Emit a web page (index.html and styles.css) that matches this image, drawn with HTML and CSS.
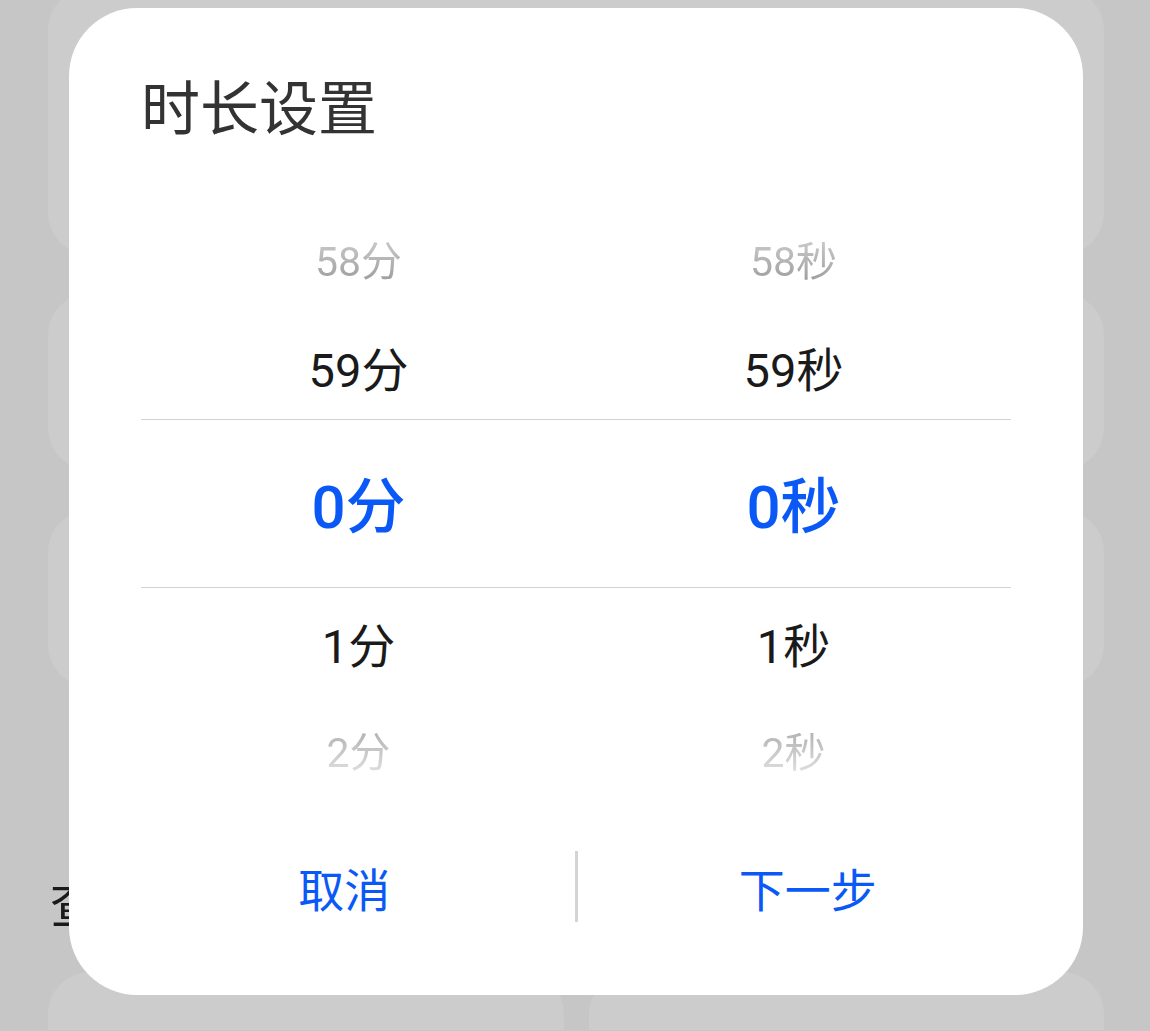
FILE: index.html
```html
<!DOCTYPE html>
<html lang="zh-CN">
<head>
<meta charset="utf-8">
<title>时长设置</title>
<link rel="stylesheet" href="styles.css">
</head>
<body>
<div class="backdrop">
  <div class="card card-first"></div>
  <div class="card card-mid"></div>
  <div class="card card-mid card-third"></div>
  <div class="under-label">查看</div>
  <div class="card-row">
    <div class="card card-bottom"></div>
    <div class="card card-bottom"></div>
  </div>
</div>

<div class="dialog">
  <h1 class="title">时长设置</h1>
  <div class="picker">
    <div class="row row-far-top"><span class="cell fade-top">58分</span><span class="cell fade-top">58秒</span></div>
    <div class="row row-near-top"><span class="cell">59分</span><span class="cell">59秒</span></div>
    <div class="row row-selected"><span class="cell selected">0分</span><span class="cell selected">0秒</span></div>
    <div class="row row-near-bottom"><span class="cell">1分</span><span class="cell">1秒</span></div>
    <div class="row row-far-bottom"><span class="cell fade-bottom">2分</span><span class="cell fade-bottom">2秒</span></div>
  </div>
  <div class="actions">
    <button class="action">取消</button>
    <span class="action-divider"></span>
    <button class="action">下一步</button>
  </div>
</div>
</body>
</html>
```

FILE: styles.css
```css
html, body {
  margin: 0;
  padding: 0;
}
body {
  width: 1150px;
  height: 1031px;
  overflow: hidden;
  background: #c6c6c6;
  position: relative;
  font-family: Roboto, "Noto Sans CJK SC", sans-serif;
}
.backdrop {
  display: flex;
  flex-direction: column;
  padding: 0 46px 0 48px;
}
.card {
  background: #cccccc;
  border-radius: 42px;
}
.card-first {
  margin-top: -12px;
  height: 267px;
}
.card-mid {
  margin-top: 38px;
  height: 177px;
}
.card-third {
  margin-top: 40px;
}
.under-label {
  margin-top: 188px;
  height: 52px;
  line-height: 52px;
  font-size: 50px;
  color: #1a1a1a;
  padding-left: 2px;
  font-family: "Noto Sans CJK SC", sans-serif;
  overflow: hidden;
}
.card-row {
  margin-top: 45px;
  display: grid;
  grid-template-columns: 1fr 1fr;
  gap: 25px;
}
.card-bottom {
  height: 58px;
  border-radius: 42px 42px 0 0;
}

.dialog {
  position: absolute;
  left: 69px;
  top: 8px;
  width: 1014px;
  height: 987px;
  background: #ffffff;
  border-radius: 68px;
  display: flex;
  flex-direction: column;
}
.title {
  margin: 0;
  padding: 57px 72px 0;
  height: 80px;
  line-height: 80px;
  font-size: 59px;
  font-weight: 400;
  color: #333333;
  font-family: "Noto Sans CJK SC", sans-serif;
}
.picker {
  margin: 63px 72px 0;
  display: flex;
  flex-direction: column;
}
.row {
  display: grid;
  grid-template-columns: 1fr 1fr;
  align-items: center;
  justify-items: center;
  box-sizing: border-box;
}
.cell {
  font-size: 47px;
  line-height: 1;
  color: #1a1a1a;
}
.row-far-top {
  height: 108px;
}
.row-near-top {
  height: 103px;
  padding-top: 5px;
}
.row-selected {
  height: 169px;
  padding-top: 8px;
  border-top: 1px solid #d2d2d2;
  border-bottom: 1px solid #d2d2d2;
}
.row-near-bottom {
  height: 116px;
}
.row-far-bottom {
  height: 98px;
}
.fade-top,
.fade-bottom {
  font-size: 41px;
  -webkit-background-clip: text;
  background-clip: text;
  color: transparent;
}
.fade-top {
  background-image: linear-gradient(to bottom, #c8c8c8, #9c9c9c);
}
.fade-bottom {
  background-image: linear-gradient(to bottom, #b4b4b4, #e0e0e0);
}
.selected {
  font-size: 60px;
  font-weight: 500;
  color: #0a59f7;
}
.actions {
  margin-top: auto;
  margin-bottom: 73px;
  padding: 0 45px;
  display: grid;
  grid-template-columns: 1fr 3px 1fr;
  align-items: center;
}
.action {
  border: 0;
  background: none;
  padding: 0;
  font-family: "Noto Sans CJK SC", sans-serif;
  font-size: 46px;
  font-weight: 400;
  color: #0a59f7;
  line-height: 60px;
  justify-self: center;
}
.action-divider {
  width: 3px;
  height: 71px;
  background: #d4d4d4;
}
```
